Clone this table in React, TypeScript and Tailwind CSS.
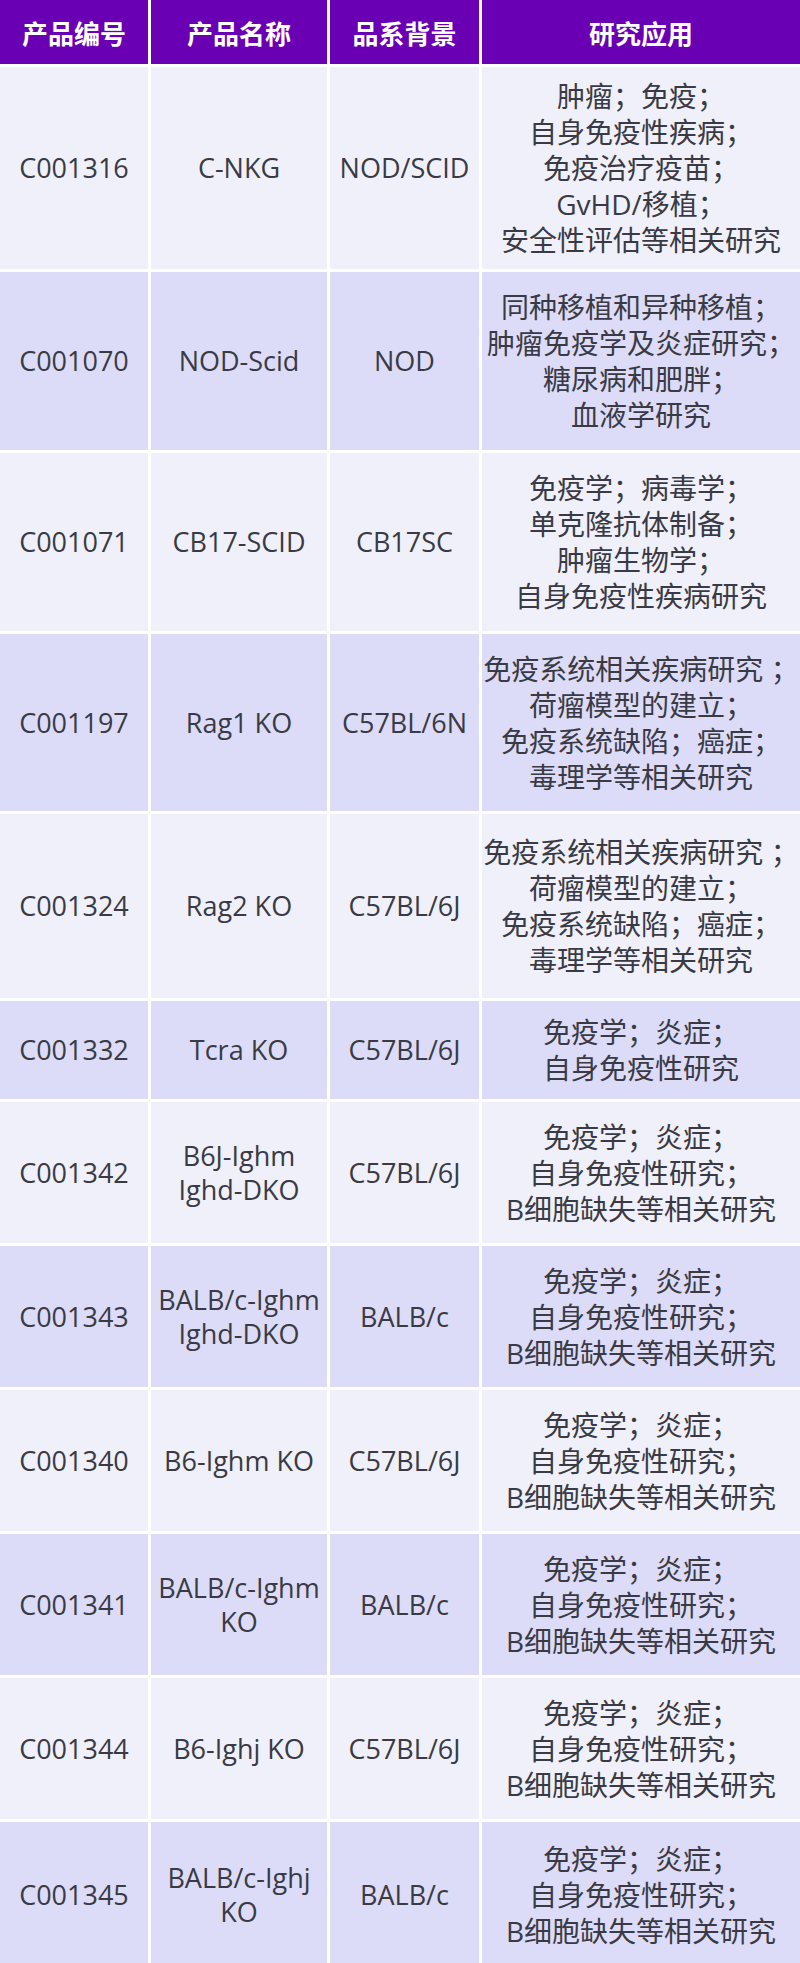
const rows: { id: string; name: string[]; bg: string; uses: string[]; h: number }[] = [
  { id: "C001316", name: ["C-NKG"], bg: "NOD/SCID", uses: ["肿瘤；免疫；", "自身免疫性疾病；", "免疫治疗疫苗；", "GvHD/移植；", "安全性评估等相关研究"], h: 202 },
  { id: "C001070", name: ["NOD-Scid"], bg: "NOD", uses: ["同种移植和异种移植；", "肿瘤免疫学及炎症研究；", "糖尿病和肥胖；", "血液学研究"], h: 178 },
  { id: "C001071", name: ["CB17-SCID"], bg: "CB17SC", uses: ["免疫学；病毒学；", "单克隆抗体制备；", "肿瘤生物学；", "自身免疫性疾病研究"], h: 178 },
  { id: "C001197", name: ["Rag1 KO"], bg: "C57BL/6N", uses: ["免疫系统相关疾病研究 ；", "荷瘤模型的建立；", "免疫系统缺陷；癌症；", "毒理学等相关研究"], h: 177 },
  { id: "C001324", name: ["Rag2 KO"], bg: "C57BL/6J", uses: ["免疫系统相关疾病研究 ；", "荷瘤模型的建立；", "免疫系统缺陷；癌症；", "毒理学等相关研究"], h: 184 },
  { id: "C001332", name: ["Tcra KO"], bg: "C57BL/6J", uses: ["免疫学；炎症；", "自身免疫性研究"], h: 98 },
  { id: "C001342", name: ["B6J-Ighm", "Ighd-DKO"], bg: "C57BL/6J", uses: ["免疫学；炎症；", "自身免疫性研究；", "B细胞缺失等相关研究"], h: 141 },
  { id: "C001343", name: ["BALB/c-Ighm", "Ighd-DKO"], bg: "BALB/c", uses: ["免疫学；炎症；", "自身免疫性研究；", "B细胞缺失等相关研究"], h: 141 },
  { id: "C001340", name: ["B6-Ighm KO"], bg: "C57BL/6J", uses: ["免疫学；炎症；", "自身免疫性研究；", "B细胞缺失等相关研究"], h: 141 },
  { id: "C001341", name: ["BALB/c-Ighm", "KO"], bg: "BALB/c", uses: ["免疫学；炎症；", "自身免疫性研究；", "B细胞缺失等相关研究"], h: 141 },
  { id: "C001344", name: ["B6-Ighj KO"], bg: "C57BL/6J", uses: ["免疫学；炎症；", "自身免疫性研究；", "B细胞缺失等相关研究"], h: 141 },
  { id: "C001345", name: ["BALB/c-Ighj", "KO"], bg: "BALB/c", uses: ["免疫学；炎症；", "自身免疫性研究；", "B细胞缺失等相关研究"], h: 146 },
];

const headers = ["产品编号", "产品名称", "品系背景", "研究应用"];

const Cell = ({ lines, tone, h }: { lines: string[]; tone: string; h: number }) => (
  <div
    style={{ height: h }}
    className={`flex flex-col items-center justify-center text-center text-[27px] leading-[34px] ${tone}`}
  >
    {lines.map((l, i) => (
      <div key={i} className="whitespace-nowrap">
        {l}
      </div>
    ))}
  </div>
);

export default function App() {
  return (
    <div
      className="w-[800px] bg-white text-[#3a3a44]"
      style={{ fontFamily: '"Open Sans", "Noto Sans CJK SC", sans-serif' }}
    >
      <div className="grid grid-cols-[148px_176px_149px_1fr] gap-[3px]">
        {headers.map((h) => (
          <div
            key={h}
            className="h-[64px] flex items-center justify-center bg-[#6a00b4] text-white font-bold text-[26px]"
            style={{ fontFamily: '"Noto Sans CJK SC", sans-serif' }}
          >
            {h}
          </div>
        ))}
        {rows.map((r, i) => {
          const tone = i % 2 === 0 ? "bg-[#eff0fa]" : "bg-[#dcdcf8]";
          return (
            <div key={r.id} className="contents">
              <Cell lines={[r.id]} tone={tone} h={r.h} />
              <Cell lines={r.name} tone={tone} h={r.h} />
              <Cell lines={[r.bg]} tone={tone} h={r.h} />
              <div
                style={{ height: r.h }}
                className={`flex flex-col items-center justify-center text-center text-[28px] leading-[36px] ${tone}`}
              >
                {r.uses.map((u, j) => (
                  <div key={j} className="whitespace-nowrap">
                    {u}
                  </div>
                ))}
              </div>
            </div>
          );
        })}
      </div>
    </div>
  );
}
